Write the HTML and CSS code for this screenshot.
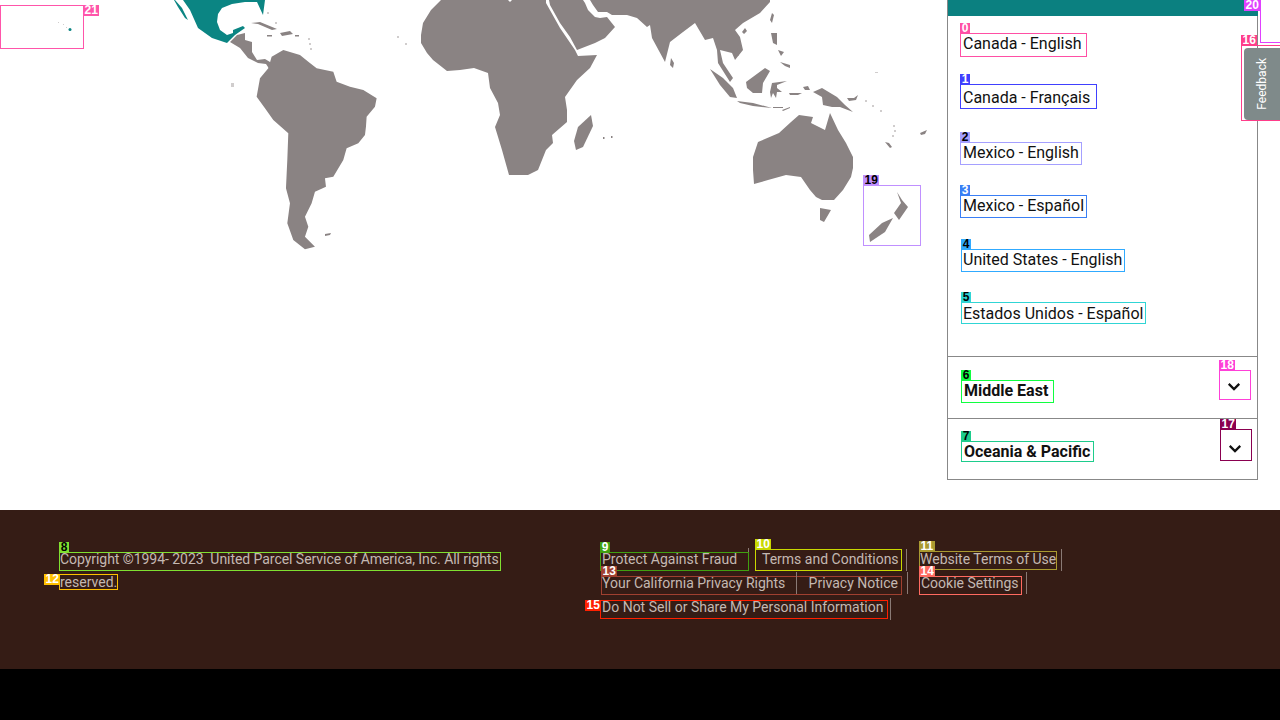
FILE: index.html
```html
<!DOCTYPE html>
<html lang="en">

<head>
    <meta charset="UTF-8" />
    <title>UPS - Choose your location</title>
    <meta name="viewport" content="width=device-width, initial-scale=1.0" />
    <link rel="stylesheet" href="styles.css">
</head>

<body>

    <div class="main">
        <!-- world map -->
        <div class="map">
            <svg class="map-art" viewBox="0 0 947 260" width="947" height="260">
                <!-- south america -->
                <path class="land" transform="scale(0.3333)" d="M815 170L850 150L900 165L925 185L950 205L1000 215L1010 245L1050 260L1090 270L1130 295L1125 320L1100 350L1098 380L1095 405L1075 430L1040 445L1030 480L1000 530L975 535L978 560L945 575L935 610L915 650L925 680L915 710L945 740L915 748L880 720L862 670L870 610L858 565L862 480L865 400L820 360L795 325L770 290L780 235L805 205Z" />
                <!-- central america and caribbean -->
                <path class="land" d="M230 42L237 35L245 33L245 40L252 42L252 52L257 60L265 59L270 62L270 70L266 64L258 63L248 58L240 48Z" />
                <path class="land" d="M251 23L260 22L277 29L272 30L258 24ZM280 33L290 31L293 34L282 36ZM267 35h5v1.500h-5zM295 35h4v1.500h-4zM325 234l6-1-1 2-5 1z" />
                <path class="faint" d="M231 83h3v4h-3zM267 12h2v2h-2zM275 22h2v2h-2zM308 38h2v2h-2zM309 43h2v2h-2zM310 48h2v2h-2zM397 36h2v2h-2zM405 43h2v2h-2zM421 36h2v2h-2z" />
                <!-- mexico and hawaii -->
                <path class="home" d="M175 0L182 8L188 20L185 18L178 7L174 0ZM183 0L190 10L198 28L212 38L227 43L235 35L245 28L243 26L233 30L233 33L227 35L220 30L217 22L218 14L222 8L232 4L245 2L257 2L263 15L265 0Z" />
                <circle class="home" cx="70" cy="29.500" r="1.500" />
                <path class="faint" d="M58 22h1v1h-1zM63 24h1v1h-1zM66 27h1v1h-1z" />
                <!-- africa -->
                <path class="land" d="M441 0L431 10L423 23L421 35L421 43L427 53L433 60L447 71L460 70L474 68L488 73L490 88L498 103L500 115L495 127L502 150L509 175L528 175L538 170L546 150L553 143L552 135L567 122L567 110L565 97L577 80L590 68L597 55L578 56L575 50L560 28L546 3L546 0L512 0L510 2L508 0Z" />
                <path class="land" d="M591 115L593 126L583 147L576 150L574 141L578 127Z" />
                <!-- arabia and asia -->
                <path class="land" d="M549 0L550 5L560 23L570 37L577 50L595 43L605 38L615 27L607 17L600 18L595 17L588 10L585 3L583 0Z" />
                <path class="land" d="M590 0L593 5L598 12L607 12L612 15L627 15L637 18L647 27L650 25L652 38L665 62L670 42L683 32L695 23L705 40L713 38L717 50L718 63L730 82L733 78L723 63L720 50L732 53L735 60L743 50L740 37L735 30L743 23L760 13L770 2L770 0Z" />
                <path class="land" d="M671 58L674 63L673 68L670 65ZM772 13L774 15L772 23L770 20ZM742 32L745 28L747 31L744 34Z" />
                <!-- indonesia and philippines -->
                <path class="land" d="M710 69L723 78L733 88L737 98L730 97L720 85ZM737 101L753 103L772 108L753 106L740 103ZM773 107h10v1h-10zM782 110L790 107L790 108L783 111ZM746 82L765 68L770 71L763 83L762 93L753 93L747 88ZM772 83L787 81L777 85L777 88L782 92L777 92L776 98L773 93L771 98L770 92ZM813 92L822 88L837 97L845 105L853 112L840 107L832 107L823 105L822 97ZM803 87L808 86L810 90L805 90ZM789 93L802 93L798 95L790 95ZM847 98L854 98L858 95L856 100L849 101ZM771 33L777 33L777 45L773 43ZM780 62L790 65L790 68L785 66ZM778 50L784 52L781 56Z" />
                <path class="faint" d="M865 100h2v2h-2zM872 105h2v2h-2zM880 110h2v2h-2zM893 125h2v2h-2zM894 130h2v2h-2zM892 135h2v2h-2zM875 72h3v1h-3zM737 48h1v2h-1zM738 54h1v2h-1z" />
                <path class="land" d="M885 142L889 143L892 147L890 148ZM920 133L927 130L925 134L921 135ZM603 137h1.500v2h-1.500zM611 136h1.500v2h-1.500z" />
                <!-- australia and new zealand -->
                <path class="land" d="M830 113L838 130L846 143L853 157L853 168L851 177L843 190L834 200L822 200L816 197L810 190L801 177L786 175L768 180L754 184L753 170L753 157L758 142L779 133L791 122L799 115L813 117L811 123L825 130ZM820 208L831 210L824 222L820 220Z" />
                <path class="land" d="M897 192L902 200L908 207L899 220L894 213L901 203ZM893 218L885 232L870 242L869 235L882 223Z" />
            </svg>
            <div class="mark pin-hawaii m21"><span class="tag tag-out">21</span></div>
            <div class="mark pin-nz m19"><span class="tag">19</span></div>
        </div>

        <!-- region panel -->
        <div class="panel">
            <div class="panel-top"></div>
            <ul class="regions">
                <li class="r0"><a class="mark m0" href="#"><span class="tag">0</span>Canada - English</a></li>
                <li class="r1"><a class="mark m1" href="#"><span class="tag">1</span>Canada - Français</a></li>
                <li class="r2"><a class="mark m2" href="#"><span class="tag">2</span>Mexico - English</a></li>
                <li class="r3"><a class="mark m3" href="#"><span class="tag">3</span>Mexico - Español</a></li>
                <li class="r4"><a class="mark m4" href="#"><span class="tag">4</span>United States - English</a></li>
                <li class="r5"><a class="mark m5" href="#"><span class="tag">5</span>Estados Unidos - Español</a></li>
            </ul>
            <div class="group group-me">
                <a class="mark group-name m6" href="#"><span class="tag">6</span>Middle East</a>
                <button class="mark toggle m18"><span class="tag">18</span>
                    <svg viewBox="0 0 16 10" width="14" height="9"><path d="M2 2l6 6 6-6" /></svg>
                </button>
            </div>
            <div class="group group-oc">
                <a class="mark group-name m7" href="#"><span class="tag">7</span>Oceania &amp; Pacific</a>
                <button class="mark toggle m17"><span class="tag">17</span>
                    <svg viewBox="0 0 16 10" width="14" height="9"><path d="M2 2l6 6 6-6" /></svg>
                </button>
            </div>
        </div>

        <div class="mark corner m20"><span class="tag tag-left">20</span></div>
        <div class="mark feedback-mark m16"><span class="tag">16</span>
            <button class="feedback"><span>Feedback</span></button>
        </div>
    </div>

    <!-- footer -->
    <div class="footer">
        <div class="copy">
            <a class="mark line-a m8" href="#"><span class="tag">8</span>Copyright ©1994- 2023&nbsp; United Parcel Service of America, Inc. All rights</a>
            <a class="mark line-b m12" href="#"><span class="tag tag-side">12</span>reserved.</a>
        </div>
        <div class="links">
            <div class="link-row row-a">
                <a class="mark l9 m9" href="#"><span class="tag">9</span>Protect Against Fraud</a>
                <a class="mark l10 m10" href="#"><span class="tag">10</span>Terms and Conditions</a>
                <i class="sep s10"></i>
                <a class="mark l11 m11" href="#"><span class="tag">11</span>Website Terms of Use</a>
                <i class="sep s11"></i>
            </div>
            <div class="link-row row-b">
                <a class="mark l13 m13" href="#"><span class="tag">13</span>Your California Privacy Rights<i class="sep s13"></i>Privacy Notice</a>
                <i class="sep s14"></i>
                <a class="mark l14 m14" href="#"><span class="tag">14</span>Cookie Settings</a>
                <i class="sep s15"></i>
            </div>
            <div class="link-row row-c">
                <a class="mark l15 m15" href="#"><span class="tag tag-side">15</span>Do Not Sell or Share My Personal Information</a>
                <i class="sep s16"></i>
            </div>
        </div>
    </div>

    <div class="bottom"></div>

</body>

</html>
```

FILE: styles.css
```css
* {
    box-sizing: border-box;
}

body {
    margin: 0;
    height: 720px;
    overflow: hidden;
    font-family: Roboto, 'Liberation Sans', sans-serif;
    font-size: 16px;
    background: #000;
}

a {
    color: inherit;
    text-decoration: none;
}

/* labelled outlines */
.mark {
    position: relative;
    display: inline-block;
    border: 1px solid var(--mark);
}

.tag {
    position: absolute;
    left: -1px;
    bottom: 100%;
    min-width: 10px;
    height: 11px;
    padding: 0 1.5px;
    background: var(--mark);
    color: var(--tag-text, #fff);
    font-family: 'Liberation Sans', sans-serif;
    font-size: 12px;
    font-weight: 700;
    line-height: 11px;
    text-align: center;
}

.tag-out {
    left: 100%;
    top: -1px;
    bottom: auto;
    width: 16px;
}

.tag-left {
    left: -17px;
    top: 1px;
    bottom: auto;
    width: 16px;
}

.tag-side {
    left: auto;
    right: 100%;
    top: -1px;
    bottom: auto;
    width: 16px;
}

.m0 { --mark: #ff4fa5; }
.m1 { --mark: #4040ff; }
.m2 { --mark: #a5a0ff; --tag-text: #000; }
.m3 { --mark: #3a7ff5; }
.m4 { --mark: #30aaff; --tag-text: #000; }
.m5 { --mark: #30d5d5; --tag-text: #000; }
.m6 { --mark: #10ff40; --tag-text: #000; }
.m7 { --mark: #1dcc8c; --tag-text: #000; }
.m8 { --mark: #80e030; --tag-text: #000; }
.m9 { --mark: #40a010; }
.m10 { --mark: #c8d800; }
.m11 { --mark: #aa9a30; }
.m12 { --mark: #ffc000; }
.m13 { --mark: #a04030; }
.m14 { --mark: #ff6a60; }
.m15 { --mark: #ff2000; }
.m16 { --mark: #ff3d8a; }
.m17 { --mark: #8a0050; }
.m18 { --mark: #ff40d8; }
.m19 { --mark: #c090ff; --tag-text: #000; }
.m20 { --mark: #e040ff; }
.m21 { --mark: #ff55aa; }

/* top area */
.main {
    position: relative;
    display: flex;
    height: 510px;
    background: #fff;
}

.map {
    position: relative;
    width: 947px;
    flex: none;
}

.map-art {
    display: block;
}

.land {
    fill: #8a8383;
}

.faint {
    fill: #8a8383;
    opacity: 0.4;
}

.home {
    fill: #0b8583;
}

.pin-hawaii {
    position: absolute;
    left: 0;
    top: 5px;
    width: 84px;
    height: 44px;
}

.pin-nz {
    position: absolute;
    left: 863px;
    top: 185px;
    width: 58px;
    height: 61px;
}

/* region panel */
.panel {
    width: 311px;
    height: 480px;
    border: 1px solid #888;
    border-top: 0;
    background: #fff;
}

.panel-top {
    height: 16px;
    margin: 0 -1px 0 0;
    background: #0b8080;
}

.regions {
    list-style: none;
    height: 340px;
    margin: 0;
    padding: 17px 0 0 12px;
    color: #111;
}

.regions li {
    line-height: 19px;
}

.regions a {
    display: inline-block;
    padding: 0 0 0 2px;
    white-space: nowrap;
}

.r0 a { width: 127px; height: 24px; }
.r1 { margin-top: 27px; }
.r1 a { width: 137px; height: 25px; line-height: 25px; }
.r2 { margin-top: 33px; }
.r2 a { width: 122px; height: 23px; }
.r3 { margin-top: 30px; }
.r3 a { width: 127px; height: 23px; }
.r4 { margin: 31px 0 0 1px; }
.r4 a { width: 164px; height: 23px; padding-left: 1px; }
.r5 { margin: 30px 0 0 1px; }
.r5 a { width: 185px; height: 22px; padding-left: 1px; line-height: 21px; }

.group {
    position: relative;
    display: flex;
    justify-content: space-between;
    padding-left: 13px;
    border-top: 1px solid #888;
}

.group-me {
    height: 62px;
    padding-top: 23px;
    padding-right: 6px;
    align-items: flex-start;
}

.group-oc {
    height: 61px;
    padding-top: 22px;
    padding-right: 5px;
    align-items: flex-start;
}

.group-name {
    padding: 0 0 0 2px;
    font-weight: 700;
    color: #111;
    white-space: nowrap;
}

.group-me .group-name {
    width: 93px;
    height: 23px;
    line-height: 19px;
}

.group-oc .group-name {
    width: 133px;
    height: 21px;
    line-height: 19px;
}

.toggle {
    display: flex;
    align-items: center;
    justify-content: center;
    width: 32px;
    background: none;
}

.group-me .toggle {
    height: 30px;
    margin-top: -10px;
    padding: 3px 3px 0 0;
}

.group-oc .toggle {
    height: 32px;
    margin-top: -12px;
    padding: 7px 3px 0 0;
}

.toggle svg {
    fill: none;
    stroke: #111;
    stroke-width: 2.6;
}

/* right edge overlays */
.corner {
    position: absolute;
    left: 1260px;
    top: -2px;
    width: 30px;
    height: 45px;
}

.feedback-mark {
    position: absolute;
    left: 1241px;
    top: 45px;
    width: 50px;
    height: 76px;
}

.feedback {
    position: absolute;
    left: 2px;
    top: 2px;
    display: flex;
    align-items: center;
    justify-content: center;
    width: 36px;
    height: 72px;
    padding: 0;
    border: 0;
    border-radius: 4px 0 0 4px;
    background: #7f8a8a;
    color: #fff;
    font-family: Roboto, sans-serif;
    font-size: 12px;
}

.feedback span {
    writing-mode: vertical-rl;
    transform: rotate(180deg);
}

/* footer */
.footer {
    display: flex;
    height: 159px;
    padding: 42px 0 0 59px;
    background: #351c15;
    color: #c4b8b2;
    font-size: 14px;
    line-height: 13px;
}

.copy {
    display: flex;
    flex-direction: column;
    align-items: flex-start;
    flex: none;
    width: 541px;
}

.line-a {
    height: 19px;
    width: 442px;
    letter-spacing: -0.05px;
    white-space: nowrap;
}

.line-b {
    height: 16px;
    margin-top: 3px;
    line-height: 14px;
}

.links {
    display: flex;
    flex-direction: column;
}

.link-row {
    display: flex;
    align-items: flex-start;
}

.row-a {
    height: 27px;
    margin-top: -3px;
}

.row-b {
    height: 24px;
    padding-left: 1px;
}

.l9 {
    width: 149px;
    height: 19px;
    margin: 3px 6px 0 0;
    padding-left: 1px;
    white-space: nowrap;
}

.l9::after {
    content: '';
    position: absolute;
    right: -1px;
    top: -5px;
    width: 1px;
    height: 4px;
    background: #8a7a75;
}

.l10 {
    width: 147px;
    height: 22px;
    padding: 2px 0 0 6px;
    line-height: 14px;
    white-space: nowrap;
}

.l11 {
    width: 138px;
    height: 19px;
    margin: 2px 0 0 12px;
    line-height: 15px;
    white-space: nowrap;
}

.l13 {
    display: flex;
    justify-content: space-between;
    width: 301px;
    height: 19px;
    padding: 0 3px 0 0;
    white-space: nowrap;
}

.l14 {
    width: 103px;
    height: 19px;
    margin-left: 11px;
    padding-left: 1px;
    white-space: nowrap;
}

.l15 {
    width: 288px;
    height: 19px;
    padding-left: 1px;
    white-space: nowrap;
}

.sep {
    display: block;
    flex: none;
    width: 1px;
    height: 22px;
    background: #8a7a75;
}

.s10 { margin-left: 4px; }
.s11 { margin-left: 4px; }
.s13 { margin: -5px 4px 0; }
.s14 { margin: -4px 0 0 5px; }
.s15 { margin: -4px 0 0 4px; }
.s16 { margin: -2px 0 0 2px; }

.bottom {
    height: 51px;
    background: #000;
}
```
